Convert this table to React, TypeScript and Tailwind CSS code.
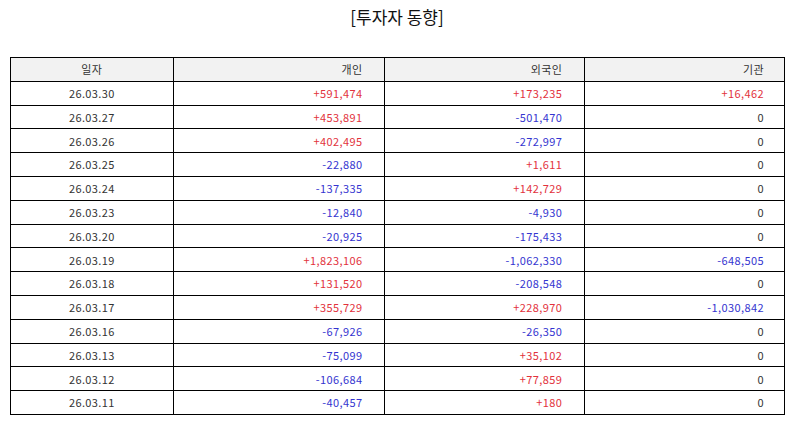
const rows: [string, string, string, string][] = [
  ["26.03.30", "+591,474", "+173,235", "+16,462"],
  ["26.03.27", "+453,891", "-501,470", "0"],
  ["26.03.26", "+402,495", "-272,997", "0"],
  ["26.03.25", "-22,880", "+1,611", "0"],
  ["26.03.24", "-137,335", "+142,729", "0"],
  ["26.03.23", "-12,840", "-4,930", "0"],
  ["26.03.20", "-20,925", "-175,433", "0"],
  ["26.03.19", "+1,823,106", "-1,062,330", "-648,505"],
  ["26.03.18", "+131,520", "-208,548", "0"],
  ["26.03.17", "+355,729", "+228,970", "-1,030,842"],
  ["26.03.16", "-67,926", "-26,350", "0"],
  ["26.03.13", "-75,099", "+35,102", "0"],
  ["26.03.12", "-106,684", "+77,859", "0"],
  ["26.03.11", "-40,457", "+180", "0"],
];

function tone(v: string) {
  if (v.startsWith("+")) return "text-[#e2323c]";
  if (v.startsWith("-")) return "text-[#3434d0]";
  return "text-[#333]";
}

export default function App() {
  return (
    <div
      className="w-[794px] h-[425px] bg-white text-[#333]"
      style={{ fontFamily: '"Noto Sans CJK KR", "Noto Sans", sans-serif' }}
    >
      <h1 className="pt-[5px] text-center text-[17px] leading-[24px] text-[#111]">[투자자 동향]</h1>
      <div className="px-[10px] pt-[28px]">
        <table className="w-[775px] border-collapse text-[11px] tracking-[0.4px]">
          <colgroup>
            <col className="w-[163px]" />
            <col className="w-[212px]" />
            <col className="w-[200px]" />
            <col className="w-[200px]" />
          </colgroup>
          <thead>
            <tr className="h-[23.8px] bg-[#f2f2f2]">
              <th className="border border-black font-normal text-center">일자</th>
              <th className="border border-black font-normal text-right pr-[22px]">개인</th>
              <th className="border border-black font-normal text-right pr-[22px]">외국인</th>
              <th className="border border-black font-normal text-right pr-[20px]">기관</th>
            </tr>
          </thead>
          <tbody>
            {rows.map(([d, a, b, c]) => (
              <tr key={d} className="h-[23.8px]">
                <td className="border border-black text-center">{d}</td>
                <td className={`border border-black text-right pr-[22px] ${tone(a)}`}>{a}</td>
                <td className={`border border-black text-right pr-[22px] ${tone(b)}`}>{b}</td>
                <td className={`border border-black text-right pr-[20px] ${tone(c)}`}>{c}</td>
              </tr>
            ))}
          </tbody>
        </table>
      </div>
    </div>
  );
}
